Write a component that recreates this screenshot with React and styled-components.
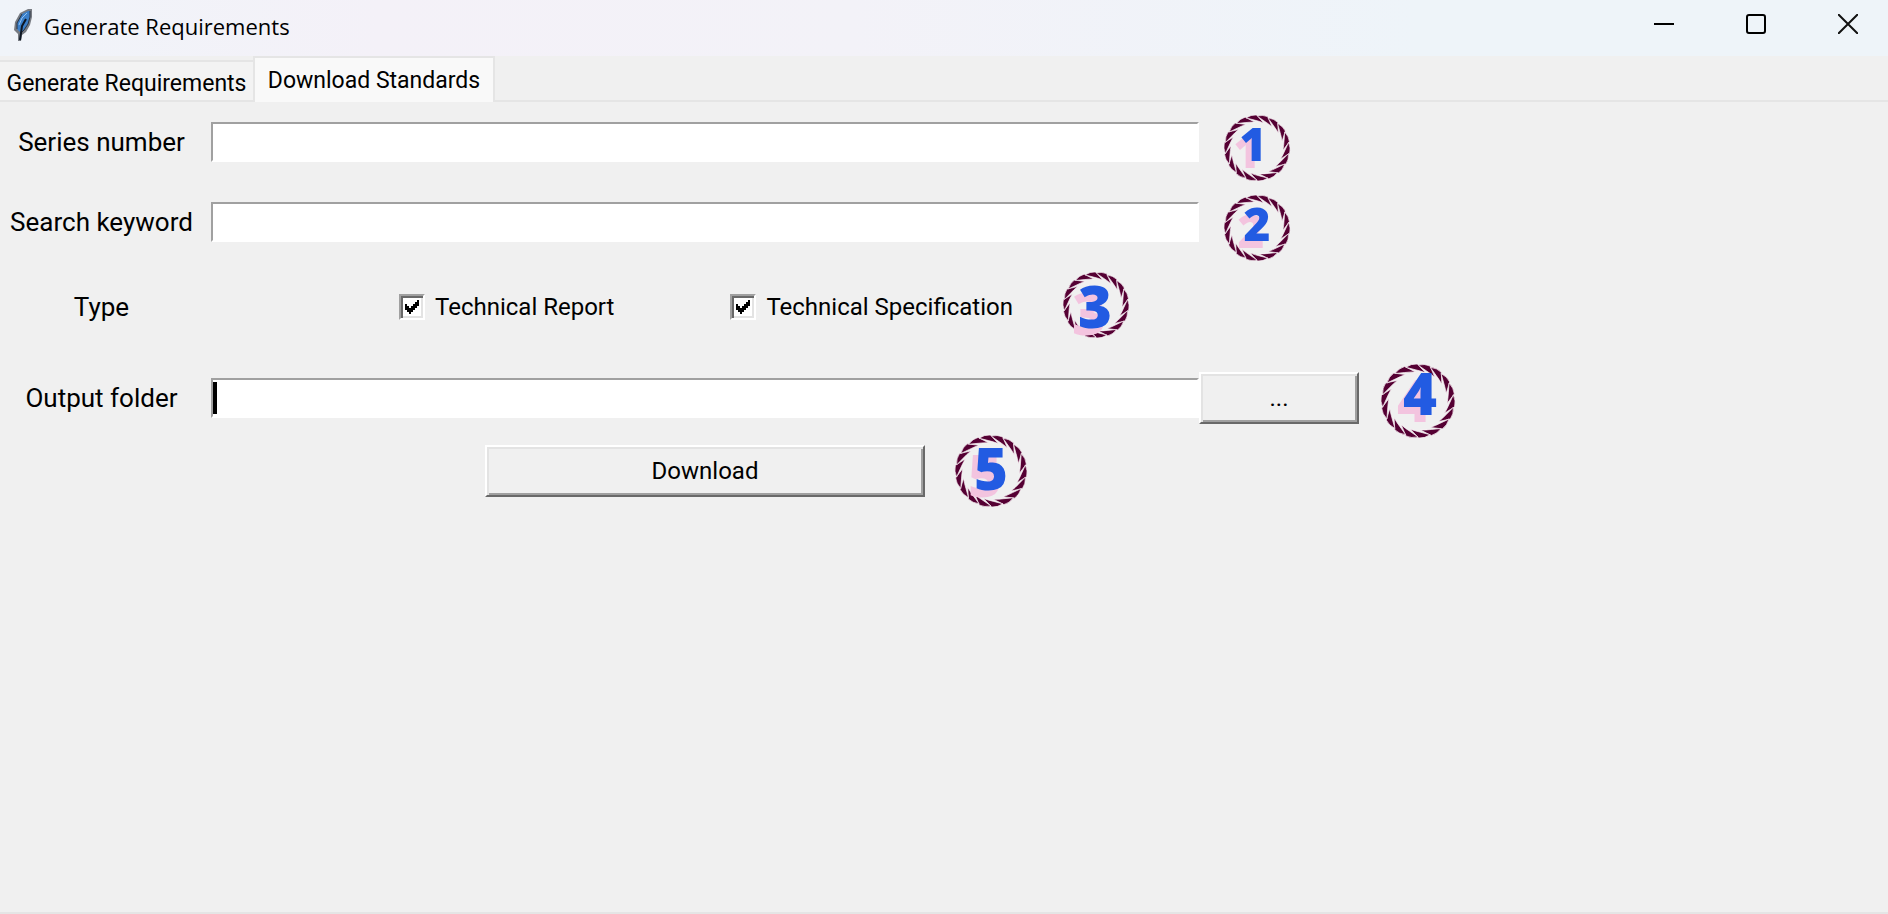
import React from "react";
import styled, { createGlobalStyle } from "styled-components";

const GlobalStyle = createGlobalStyle`
  * { box-sizing: border-box; }
  body { margin: 0; background: #f0f0f0; }
`;

const Window = styled.div`
  min-height: 100vh;
  display: flex;
  flex-direction: column;
  background: #f0f0f0;
  border-bottom: 2px solid #e5e5e5;
  color: #000;
  font-family: Roboto, "Liberation Sans", sans-serif;
  font-size: 24px;
`;

const TitleBar = styled.header`
  height: 56px;
  display: flex;
  align-items: flex-start;
  background: linear-gradient(90deg, #f0f4f9 0%, #f4f1f8 20%, #f3f2f8 45%, #eef4f9 75%, #eef4f9 100%);
`;

const Feather = styled.svg`
  flex: none;
  width: 20px;
  height: 34px;
  margin: 8px 10px 0 14px;
`;

const Title = styled.h1`
  flex: 1;
  margin: 0;
  padding-top: 11px;
  font: 400 22px/30px "Open Sans", "Noto Sans", sans-serif;
`;

const WindowButton = styled.button`
  width: 92px;
  height: 48px;
  padding: 0 0 0 12px;
  border: 0;
  background: none;
  display: flex;
  align-items: center;
  justify-content: center;
`;

const TabBar = styled.div`
  height: 46px;
  display: flex;
  align-items: flex-end;
  box-shadow: inset 0 -2px #e5e5e5;
`;

const Tab = styled.button`
  height: ${(p) => (p.$active ? 46 : 42)}px;
  min-width: ${(p) => (p.$active ? 242 : 253)}px;
  padding: ${(p) => (p.$active ? "0 8px" : "4px 4px 0")};
  border: solid #e5e5e5;
  border-width: ${(p) => (p.$active ? "2px 2px 0" : "2px 0")};
  background: ${(p) => (p.$active ? "#f9f9f9" : "#f3f3f3")};
  color: inherit;
  font: inherit;
  font-size: 23px;
`;

const Form = styled.form`
  padding-top: 8px;
`;

const Row = styled.div`
  height: ${(p) => p.$height}px;
  margin-top: ${(p) => p.$above || 0}px;
  display: grid;
  grid-template-rows: 100%;
  grid-template-columns: 211px minmax(0, 988fr) minmax(0, 689fr);
  align-items: center;
`;

const Label = styled.label`
  grid-column: 1;
  padding-right: 8px;
  text-align: center;
  font-size: 26px;
`;

const TextField = styled.input`
  width: 100%;
  height: 40px;
  padding: 0 4px;
  border: 2px solid;
  border-color: #a0a0a0 #fff #fff #a0a0a0;
  border-radius: 0;
  outline: none;
  background: #fff;
  font: inherit;
`;

const FocusedField = styled.div`
  display: flex;
  align-items: center;
  border: 2px solid;
  border-color: #a0a0a0 #fff #fff #a0a0a0;
  background: #fff;

  &::before {
    content: "";
    width: 4px;
    height: 32px;
    background: #000;
  }

  ${TextField} {
    height: 36px;
    border: 0;
    caret-color: transparent;
  }
`;

const Aside = styled.div`
  display: flex;
  align-items: center;
  padding-left: ${(p) => p.$indent || 0}px;
`;

const Options = styled.div`
  grid-column: 2 / 4;
  display: flex;
  align-items: center;
  padding-left: 188px;
`;

const Option = styled.label`
  display: flex;
  align-items: center;
  gap: 10px;
  margin-right: ${(p) => p.$after}px;
`;

const CheckBox = styled.input`
  appearance: none;
  width: 26px;
  height: 26px;
  margin: 0;
  border: 2px solid;
  border-color: #a0a0a0 #fff #fff #a0a0a0;
  box-shadow: inset 2px 2px #696969, inset -2px -2px #e3e3e3;
  background: #fff;

  &:checked {
    background: #fff url("data:image/svg+xml,%3Csvg xmlns='http://www.w3.org/2000/svg' viewBox='0 0 22 22'%3E%3Cpath d='M4 8h2v2h2v2h2v-2h2V8h2V6h2V4h2v6h-2v2h-2v2h-2v2h-2v2H8v-2H6v-2H4z'/%3E%3C/svg%3E") center / 22px 22px no-repeat;
  }
`;

const PushButton = styled.button`
  width: ${(p) => p.$width}px;
  height: 52px;
  padding: 0;
  border: 2px solid;
  border-color: #fff #696969 #696969 #fff;
  box-shadow: inset 2px 2px #e3e3e3, inset -2px -2px #a0a0a0;
  background: #f0f0f0;
  color: inherit;
  font: inherit;
`;

const Actions = styled.div`
  grid-column: 2;
  display: grid;
  grid-template-columns: 1fr auto 1fr;
  align-items: center;
`;

const BadgeBox = styled.svg`
  flex: none;
  display: block;
  width: ${(p) => p.$size}px;
  height: ${(p) => p.$size}px;
  overflow: visible;
  margin: ${(p) => p.$drop || 0}px 0 0 ${(p) => p.$gap || 0}px;

  text {
    fill: #225be2;
    font: 800 ${(p) => p.$digit}px "Open Sans", "Noto Sans", sans-serif;
    text-anchor: middle;
    filter: drop-shadow(-6px 7px 0 #f3c4df);
  }
`;

const STRANDS = 18;

const polar = (deg, r) => {
  const a = (deg * Math.PI) / 180;
  return `${(33 + r * Math.sin(a)).toFixed(2)} ${(33 - r * Math.cos(a)).toFixed(2)}`;
};

const STRAND = `M${polar(0, 32)} Q${polar(10, 34)} ${polar(19, 33)} L${polar(35, 26)} Q${polar(24, 27)} ${polar(15, 28)}Z`;

function Badge({ number, size, digit, gap, drop, x, y }) {
  return (
    <BadgeBox
      $size={size}
      $digit={digit}
      $gap={gap}
      $drop={drop}
      viewBox={`0 0 ${size} ${size}`}
      aria-label={`Step ${number}`}
    >
      <g transform={`scale(${size / 66})`} fill="#550033" stroke="#fbf2f7" strokeWidth="0.6">
        {Array.from({ length: STRANDS }, (_, i) => (
          <path key={i} d={STRAND} transform={`rotate(${(i * 360) / STRANDS} 33 33)`} />
        ))}
      </g>
      <text x={x} y={y}>{number}</text>
    </BadgeBox>
  );
}

export default function App() {
  return (
    <Window>
      <GlobalStyle />
      <TitleBar>
        <Feather viewBox="0 0 20 34" aria-hidden="true">
          <path d="M14 1 L18 1 18 9 16 17 12 24 8 27 7 33 4 33 4 26 0 22 1 14 6 5Z" fill="#777b82" />
          <path d="M14 3 L16 3 16 9 14 16 10 22 7 25 3 21 3 15 8 6Z" fill="#3b7fc9" />
          <path d="M16 3 V9 L14 16 10 22 7 25 M3 21 V15 L8 6" fill="none" stroke="#2a3442" strokeWidth="1" />
          <path d="M12 11 L8 18 6 32" fill="none" stroke="#0d1622" strokeWidth="2" />
          <path d="M13 5 L8 10 5 17" fill="none" stroke="#8fc2f2" strokeWidth="1" />
        </Feather>
        <Title>Generate Requirements</Title>
        <WindowButton type="button" aria-label="Minimize">
          <svg width="20" height="20"><path d="M0 10h20" stroke="#000" strokeWidth="2" /></svg>
        </WindowButton>
        <WindowButton type="button" aria-label="Maximize">
          <svg width="20" height="20"><rect x="1" y="1" width="18" height="18" rx="2" fill="none" stroke="#000" strokeWidth="2" /></svg>
        </WindowButton>
        <WindowButton type="button" aria-label="Close">
          <svg width="20" height="20"><path d="M0 0L20 20M20 0L0 20" stroke="#111" strokeWidth="2" /></svg>
        </WindowButton>
      </TitleBar>
      <TabBar role="tablist">
        <Tab type="button" role="tab" aria-selected="false">Generate Requirements</Tab>
        <Tab type="button" role="tab" aria-selected="true" $active>Download Standards</Tab>
      </TabBar>
      <Form onSubmit={(e) => e.preventDefault()}>
        <Row $height={64}>
          <Label htmlFor="series">Series number</Label>
          <TextField id="series" type="text" />
          <Aside $indent={25}><Badge number="1" size={66} digit={46} drop={12} x={29} y={46} /></Aside>
        </Row>
        <Row $height={96}>
          <Label htmlFor="keyword">Search keyword</Label>
          <TextField id="keyword" type="text" />
          <Aside $indent={25}><Badge number="2" size={66} digit={46} drop={12} x={33} y={46} /></Aside>
        </Row>
        <Row $height={74} role="group" aria-labelledby="type">
          <Label as="span" id="type">Type</Label>
          <Options>
            <Option $after={116}><CheckBox type="checkbox" defaultChecked />Technical Report</Option>
            <Option $after={50}><CheckBox type="checkbox" defaultChecked />Technical Specification</Option>
            <Badge number="3" size={66} digit={58} drop={-4} x={32} y={56} />
          </Options>
        </Row>
        <Row $height={76} $above={16}>
          <Label htmlFor="folder">Output folder</Label>
          <FocusedField><TextField id="folder" type="text" aria-label="Output folder" /></FocusedField>
          <Aside>
            <PushButton type="button" $width={160}>...</PushButton>
            <Badge number="4" size={74} digit={58} gap={22} drop={6} x={39} y={51} />
          </Aside>
        </Row>
        <Row $height={70}>
          <Actions>
            <span />
            <PushButton type="submit" $width={440}>Download</PushButton>
            <Badge number="5" size={72} digit={58} gap={30} x={36} y={55} />
          </Actions>
        </Row>
      </Form>
    </Window>
  );
}
